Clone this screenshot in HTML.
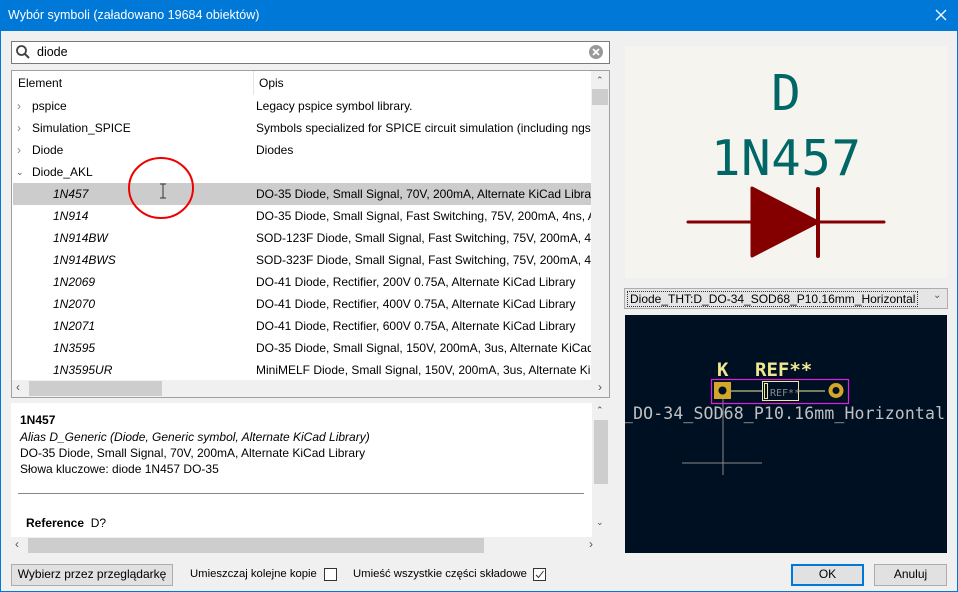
<!DOCTYPE html>
<html><head><meta charset="utf-8"><style>
*{margin:0;padding:0;box-sizing:border-box}
body{width:958px;height:592px;background:#0078d7;font-family:"Liberation Sans",sans-serif;font-size:12px;color:#000;position:relative;overflow:hidden}
.a{position:absolute}
#win{left:1px;top:31px;width:956px;height:560px;background:#f0f0f0}
.title{left:8px;top:8px;color:#fff;font-size:12.5px}
.rowt{position:absolute;left:0;height:22px;line-height:22px;width:580px;white-space:nowrap;overflow:hidden}
.rowt span{position:absolute}
.btn{background:#e1e1e1;border:1px solid #adadad;text-align:center;line-height:19px;font-size:12px}
.cb{position:absolute;width:13px;height:13px;border:1px solid #333;background:#fff}
</style></head><body>
<div class="a title">Wybór symboli (załadowano 19684 obiektów)</div>
<svg class="a" style="left:935px;top:9px" width="12" height="12"><path d="M1 1L11 11M11 1L1 11" stroke="#fff" stroke-width="1.3"/></svg>
<div id="win" class="a"></div>
<!-- search -->
<div class="a" style="left:11px;top:41px;width:599px;height:23px;background:#fff;border:1px solid #7a7a7a"></div>
<svg class="a" style="left:15px;top:44px" width="16" height="16"><circle cx="6.5" cy="6.5" r="4.5" fill="none" stroke="#444" stroke-width="1.8"/><path d="M10 10L14 14" stroke="#444" stroke-width="2"/></svg>
<div class="a" style="left:37px;top:45px;font-size:12.5px">diode</div>
<svg class="a" style="left:588px;top:44px" width="16" height="16"><circle cx="8" cy="8" r="7" fill="#999"/><path d="M5 5L11 11M11 5L5 11" stroke="#fff" stroke-width="1.8"/></svg>
<!-- list -->
<div class="a" style="left:11px;top:70px;width:599px;height:328px;background:#fff;border:1px solid #a0a0a0;overflow:hidden">
 <div class="a" style="left:0;top:0;width:580px;height:24px;background:#fff"></div>
 <div class="a" style="left:6px;top:5px">Element</div>
 <div class="a" style="left:241px;top:0;width:1px;height:24px;background:#e5e5e5"></div>
 <div class="a" style="left:247px;top:5px">Opis</div>
 <div class="a" style="left:1px;top:112px;width:578px;height:22px;background:#ccc"></div>
 <div class="a" style="left:0;top:24px;width:580px">
  <div class="rowt" style="top:0"><span style="left:5px;color:#888">›</span><span style="left:20px">pspice</span><span style="left:244px">Legacy pspice symbol library.</span></div>
  <div class="rowt" style="top:22px"><span style="left:5px;color:#888">›</span><span style="left:20px">Simulation_SPICE</span><span style="left:244px">Symbols specialized for SPICE circuit simulation (including ngspice)</span></div>
  <div class="rowt" style="top:44px"><span style="left:5px;color:#888">›</span><span style="left:20px">Diode</span><span style="left:244px">Diodes</span></div>
  <div class="rowt" style="top:66px"><span style="left:4px;color:#555;font-size:9px">&#8964;</span><span style="left:20px">Diode_AKL</span></div>
  <div class="rowt" style="top:88px"><span style="left:41px;font-style:italic">1N457</span><span style="left:244px">DO-35 Diode, Small Signal, 70V, 200mA, Alternate KiCad Library</span></div>
  <div class="rowt" style="top:110px"><span style="left:41px;font-style:italic">1N914</span><span style="left:244px">DO-35 Diode, Small Signal, Fast Switching, 75V, 200mA, 4ns, Alternate</span></div>
  <div class="rowt" style="top:132px"><span style="left:41px;font-style:italic">1N914BW</span><span style="left:244px">SOD-123F Diode, Small Signal, Fast Switching, 75V, 200mA, 4ns, Alt</span></div>
  <div class="rowt" style="top:154px"><span style="left:41px;font-style:italic">1N914BWS</span><span style="left:244px">SOD-323F Diode, Small Signal, Fast Switching, 75V, 200mA, 4ns, Alt</span></div>
  <div class="rowt" style="top:176px"><span style="left:41px;font-style:italic">1N2069</span><span style="left:244px">DO-41 Diode, Rectifier, 200V 0.75A, Alternate KiCad Library</span></div>
  <div class="rowt" style="top:198px"><span style="left:41px;font-style:italic">1N2070</span><span style="left:244px">DO-41 Diode, Rectifier, 400V 0.75A, Alternate KiCad Library</span></div>
  <div class="rowt" style="top:220px"><span style="left:41px;font-style:italic">1N2071</span><span style="left:244px">DO-41 Diode, Rectifier, 600V 0.75A, Alternate KiCad Library</span></div>
  <div class="rowt" style="top:242px"><span style="left:41px;font-style:italic">1N3595</span><span style="left:244px">DO-35 Diode, Small Signal, 150V, 200mA, 3us, Alternate KiCad Library</span></div>
  <div class="rowt" style="top:264px"><span style="left:41px;font-style:italic">1N3595UR</span><span style="left:244px">MiniMELF Diode, Small Signal, 150V, 200mA, 3us, Alternate KiCad Library</span></div>
 </div>
 <div class="a" style="left:579px;top:0;width:18px;height:309px;background:#f0f0f0"></div>
 <div class="a" style="left:580px;top:18px;width:16px;height:16px;background:#cdcdcd"></div>
 <div class="a" style="left:584px;top:4px;color:#555;font-size:9px">&#8963;</div>
 <div class="a" style="left:0;top:309px;width:597px;height:17px;background:#f0f0f0"></div>
 <div class="a" style="left:17px;top:310px;width:133px;height:15px;background:#cdcdcd"></div>
 <div class="a" style="left:4px;top:309px;color:#555">‹</div>
 <div class="a" style="left:586px;top:309px;color:#555">›</div>
</div>
<!-- details -->
<div class="a" style="left:11px;top:403px;width:599px;height:150px;background:#f0f0f0">
 <div class="a" style="left:0;top:0;width:581px;height:134px;background:#fff"></div>
 <div class="a" style="left:581px;top:0;width:18px;height:134px;background:#f0f0f0"></div>
 <div class="a" style="left:583px;top:17px;width:14px;height:64px;background:#cdcdcd"></div>
 <div class="a" style="left:585px;top:2px;color:#555;font-size:9px">&#8963;</div>
 <div class="a" style="left:585px;top:114px;color:#555;font-size:9px">&#8964;</div>
 <div class="a" style="left:9px;top:10px;font-weight:bold">1N457</div>
 <div class="a" style="left:9px;top:27px;font-style:italic">Alias D_Generic (Diode, Generic symbol, Alternate KiCad Library)</div>
 <div class="a" style="left:9px;top:43px">DO-35 Diode, Small Signal, 70V, 200mA, Alternate KiCad Library</div>
 <div class="a" style="left:9px;top:59px">Słowa kluczowe: diode 1N457 DO-35</div>
 <div class="a" style="left:7px;top:90px;width:566px;height:1px;background:#888"></div>
 <div class="a" style="left:15px;top:113px"><b>Reference</b>&nbsp; D?</div>
 <div class="a" style="left:17px;top:135px;width:456px;height:15px;background:#cdcdcd"></div>
 <div class="a" style="left:4px;top:134px;color:#555">‹</div>
 <div class="a" style="left:578px;top:134px;color:#555">›</div>
</div>
<!-- bottom -->
<div class="a btn" style="left:11px;top:564px;width:162px;height:22px">Wybierz przez przeglądarkę</div>
<div class="a" style="left:190px;top:568px;font-size:11.3px">Umieszczaj kolejne kopie</div>
<div class="cb" style="left:324px;top:568px"></div>
<div class="a" style="left:353px;top:568px;font-size:11.3px">Umieść wszystkie części składowe</div>
<div class="cb" style="left:533px;top:568px"><svg width="11" height="11" style="position:absolute;left:0;top:0"><path d="M2 6L4.5 8.5L9.5 2" fill="none" stroke="#333" stroke-width="1"/></svg></div>
<div class="a btn" style="left:791px;top:564px;width:73px;height:22px;border:2px solid #0078d7;line-height:17px">OK</div>
<div class="a btn" style="left:874px;top:564px;width:73px;height:22px">Anuluj</div>
<!-- symbol preview -->
<svg class="a" style="left:625px;top:46px" width="322" height="232">
 <rect width="322" height="232" fill="#f5f4ef"/>
 <text x="161" y="64" text-anchor="middle" font-family="DejaVu Sans Mono,monospace" font-size="49" fill="#006666">D</text>
 <text x="161" y="129" text-anchor="middle" font-family="DejaVu Sans Mono,monospace" font-size="49" fill="#006666" textLength="150">1N457</text>
 <path d="M63 176H259" stroke="#840000" stroke-width="3" stroke-linecap="round"/>
 <path d="M127 142L193 176L127 210Z" fill="#840000" stroke="#840000" stroke-width="3" stroke-linejoin="round"/>
 <path d="M193 143V210" stroke="#840000" stroke-width="4" stroke-linecap="round"/>
</svg>
<!-- dropdown -->
<div class="a" style="left:624px;top:288px;width:324px;height:21px;background:#e5e5e5;border:1px solid #adadad"></div>
<div class="a" style="left:627px;top:291px;font-size:12px;border:1px dotted #333;padding:0 2px;line-height:14px">Diode_THT:D_DO-34_SOD68_P10.16mm_Horizontal</div>
<div class="a" style="left:933px;top:290px;color:#555;font-size:10px">&#8964;</div>
<!-- footprint -->
<svg class="a" style="left:625px;top:315px" width="322" height="238">
 <rect width="322" height="238" fill="#001023"/>
 <path d="M98 76V160M57 148H137" stroke="#888" stroke-width="1"/>
 <path d="M106 76H137M173 76H200" stroke="#f0e8a0" stroke-width="1"/>
 <rect x="86.5" y="64.5" width="137" height="24" fill="none" stroke="#e020e0" stroke-width="1.2"/>
 <rect x="89" y="67" width="17" height="17" fill="#d4a62a"/>
 <circle cx="97.5" cy="75.5" r="4" fill="#001023"/>
 <circle cx="211" cy="75.5" r="7.5" fill="#d4a62a"/>
 <circle cx="211" cy="75.5" r="3.5" fill="#001023"/>
 <rect x="137.5" y="66.5" width="36" height="19" fill="none" stroke="#f0e8a0" stroke-width="1"/>
 <rect x="139.5" y="68.5" width="3" height="15" fill="none" stroke="#f0e8a0" stroke-width="1"/>
 <text x="145" y="81" font-family="DejaVu Sans Mono,monospace" font-size="10" fill="#888">REF**</text>
 <text x="92" y="61" font-family="DejaVu Sans Mono,monospace" font-size="19" font-weight="bold" fill="#f0e890">K</text>
 <text x="130" y="61" font-family="DejaVu Sans Mono,monospace" font-size="19" font-weight="bold" fill="#f0e890">REF**</text>
 <text x="-2" y="104" font-family="DejaVu Sans Mono,monospace" font-size="16.5" fill="#c0c0c0" textLength="322">_DO-34_SOD68_P10.16mm_Horizontal</text>
</svg>
<!-- red circle cursor -->
<svg class="a" style="left:127px;top:157px" width="70" height="64"><ellipse cx="34" cy="31" rx="32" ry="30" fill="none" stroke="#e00" stroke-width="2"/><path d="M36 27V41M33 27H39M33 41H39" stroke="#333" stroke-width="1"/></svg>
</body></html>
